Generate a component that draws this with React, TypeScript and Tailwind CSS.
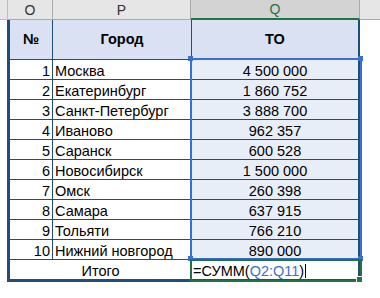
import React from "react";

const rows = [
    { n: 1, city: "Москва", to: "4 500 000" },
    { n: 2, city: "Екатеринбург", to: "1 860 752" },
    { n: 3, city: "Санкт-Петербург", to: "3 888 700" },
    { n: 4, city: "Иваново", to: "962 357" },
    { n: 5, city: "Саранск", to: "600 528" },
    { n: 6, city: "Новосибирск", to: "1 500 000" },
    { n: 7, city: "Омск", to: "260 398" },
    { n: 8, city: "Самара", to: "637 915" },
    { n: 9, city: "Тольяти", to: "766 210" },
    { n: 10, city: "Нижний новгород", to: "890 000" },
];

export default function App() {
    return (
        <div className="relative w-[380px] h-[298px] bg-white overflow-hidden text-black font-['Liberation_Sans',Arial,sans-serif]">
            {/* column headers */}
            <div className="flex h-[20px] text-[14px] text-[#333]">
                <div className="w-[8px] bg-[#e6e6e6] border-r border-b border-[#bdbdbd]" />
                <div className="w-[45px] bg-[#e6e6e6] border-r border-b border-[#ababab] flex items-center justify-center leading-none">O</div>
                <div className="w-[138px] bg-[#e6e6e6] border-r border-b border-[#ababab] flex items-center justify-center leading-none">P</div>
                <div className="w-[169px] bg-[#d3d3d3] border-r border-r-[#ababab] border-b-2 border-b-[#217346] text-[#217346] flex items-center justify-center leading-none">Q</div>
                <div className="flex-1 bg-[#e6e6e6] border-b border-[#ababab]" />
            </div>

            {/* table */}
            <div className="ml-[7px] w-[353px] border-l-[3px] border-r-2 border-b-[3px] border-[#1f4e79] text-[14.5px]">
                <div className="flex h-[40px] border-b border-[#1f4e79] bg-[#d9e1f2] font-bold">
                    <div className="w-[43px] border-r border-[#1f4e79] flex items-center justify-center">№</div>
                    <div className="w-[139px] border-r border-[#1f4e79] flex items-center justify-center">Город</div>
                    <div className="flex-1 flex items-center justify-center">ТО</div>
                </div>
                {rows.map((r) => (
                    <div key={r.n} className="flex h-[20px] border-b border-[#1f4e79] leading-[16px]">
                        <div className="w-[43px] border-r border-[#1f4e79] flex items-end justify-end pr-[2px]">{r.n}</div>
                        <div className="w-[139px] border-r border-[#1f4e79] flex items-end pl-[2px] whitespace-nowrap">{r.city}</div>
                        <div className="flex-1 bg-[#e8eef8] flex items-end justify-center">{r.to}</div>
                    </div>
                ))}
                <div className="flex h-[19px] leading-[16px]">
                    <div className="w-[182px] border-r border-[#1f4e79] flex items-end justify-center">Итого</div>
                    <div className="flex-1 flex items-end pl-[1px] whitespace-nowrap">
                        <span>=СУММ(</span>
                        <span className="text-[#3a6fcf]">Q2:Q11</span>
                        <span>)</span>
                        <span className="ml-[1px] mb-[1px] h-[14px] border-l border-black" />
                    </div>
                </div>
            </div>

            {/* referenced range Q2:Q11 */}
            <div className="absolute left-[190px] top-[58px] w-[172px] h-[202px] border-2 border-[#3a6fcf]" />
            <div className="absolute left-[188px] top-[56px] w-[5px] h-[5px] bg-[#3a6fcf]" />
            <div className="absolute left-[358px] top-[56px] w-[5px] h-[5px] bg-[#3a6fcf]" />
            <div className="absolute left-[188px] top-[256px] w-[5px] h-[5px] bg-[#3a6fcf]" />
            <div className="absolute left-[358px] top-[256px] w-[5px] h-[5px] bg-[#3a6fcf]" />

            {/* active cell Q12 */}
            <div className="absolute left-[190px] top-[259px] w-[172px] h-[23px] border-2 border-[#217346]" />
            <div className="absolute left-[356px] top-[276px] w-[7px] h-[7px] bg-white p-[1px]">
                <div className="w-[5px] h-[5px] bg-[#217346]" />
            </div>
        </div>
    );
}
